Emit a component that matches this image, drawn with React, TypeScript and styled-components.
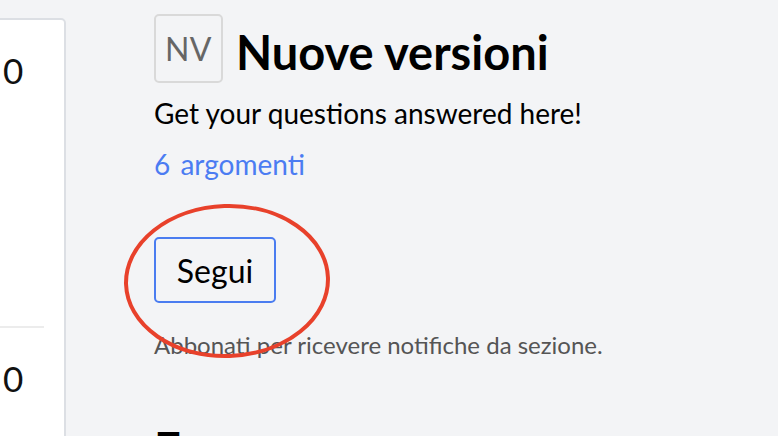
import styled, { createGlobalStyle } from "styled-components"

const GlobalStyle = createGlobalStyle`
  html, body {
    margin: 0;
    padding: 0;
    background: #f3f4f6;
    font-family: Lato, "Noto Sans", sans-serif;
    overflow: hidden;
  }
`

const Page = styled.div`
  display: flex;
  align-items: flex-start;
  gap: 88px;
  height: 436px;
  overflow: hidden;
`

const StatsCard = styled.div`
  margin-left: -20px;
  margin-top: 18px;
  width: 82px;
  height: 440px;
  background: #fff;
  border: 2px solid #dcdfe4;
  border-radius: 0 5px 0 0;
  display: flex;
  flex-direction: column;
`

const StatRow = styled.div<{ $divided?: boolean }>`
  padding: 30px 0 0 21px;
  height: ${p => (p.$divided ? "auto" : "306px")};
  box-sizing: border-box;
  border-top: ${p => (p.$divided ? "2px solid #ececec" : "none")};
  margin-right: ${p => (p.$divided ? "20px" : "0")};
  font-size: 35px;
  line-height: 40px;
  color: #111;
`

const Main = styled.div`
  position: relative;
  display: flex;
  flex-direction: column;
  padding-top: 14px;
`

const TitleRow = styled.div`
  display: flex;
  align-items: center;
  gap: 13px;
`

const Logo = styled.div`
  width: 65px;
  height: 65px;
  border: 2px solid #d9d9d9;
  border-radius: 5px;
  display: flex;
  align-items: center;
  justify-content: center;
  font-size: 32px;
  color: #666;
  letter-spacing: 0.5px;
`

const Title = styled.h1`
  margin: 6px 0 0;
  font-size: 47px;
  font-weight: 700;
  color: #000;
  line-height: 56px;
`

const Description = styled.p`
  margin: 13px 0 0;
  font-size: 28px;
  line-height: 34px;
  color: #000;
`

const TopicLink = styled.a`
  margin-top: 17px;
  font-size: 28px;
  line-height: 34px;
  color: #4b7cf2;
  text-decoration: none;
  word-spacing: 3px;
`

const FollowButton = styled.button`
  margin-top: 56px;
  align-self: flex-start;
  width: 122px;
  height: 66px;
  border: 2px solid #4a7cf0;
  border-radius: 5px;
  background: transparent;
  font-family: inherit;
  font-size: 32px;
  color: #000;
`

const Hint = styled.p`
  margin: 27px 0 0;
  font-size: 24px;
  line-height: 30px;
  color: #555;
`

const SectionHeading = styled.h2`
  margin: 61px 0 0;
  font-size: 47px;
  font-weight: 700;
  line-height: 56px;
  color: #000;
  white-space: nowrap;
`

const Annotation = styled.svg`
  position: absolute;
  left: -32px;
  top: 201px;
  width: 210px;
  height: 160px;
  pointer-events: none;
`

export default function App() {
  return (
    <>
      <GlobalStyle />
      <Page>
        <StatsCard>
          <StatRow>0</StatRow>
          <StatRow $divided>0</StatRow>
        </StatsCard>
        <Main>
          <TitleRow>
            <Logo>NV</Logo>
            <Title>Nuove versioni</Title>
          </TitleRow>
          <Description>Get your questions answered here!</Description>
          <TopicLink href="#">6 argomenti</TopicLink>
          <FollowButton>Segui</FollowButton>
          <Hint>Abbonati per ricevere notifiche da sezione.</Hint>
          <SectionHeading>F</SectionHeading>
          <Annotation viewBox="0 0 210 160">
            <ellipse cx="105" cy="80" rx="101" ry="75" transform="rotate(-2 105 80)" fill="none" stroke="#e8412b" strokeWidth="4" />
          </Annotation>
        </Main>
      </Page>
    </>
  )
}
